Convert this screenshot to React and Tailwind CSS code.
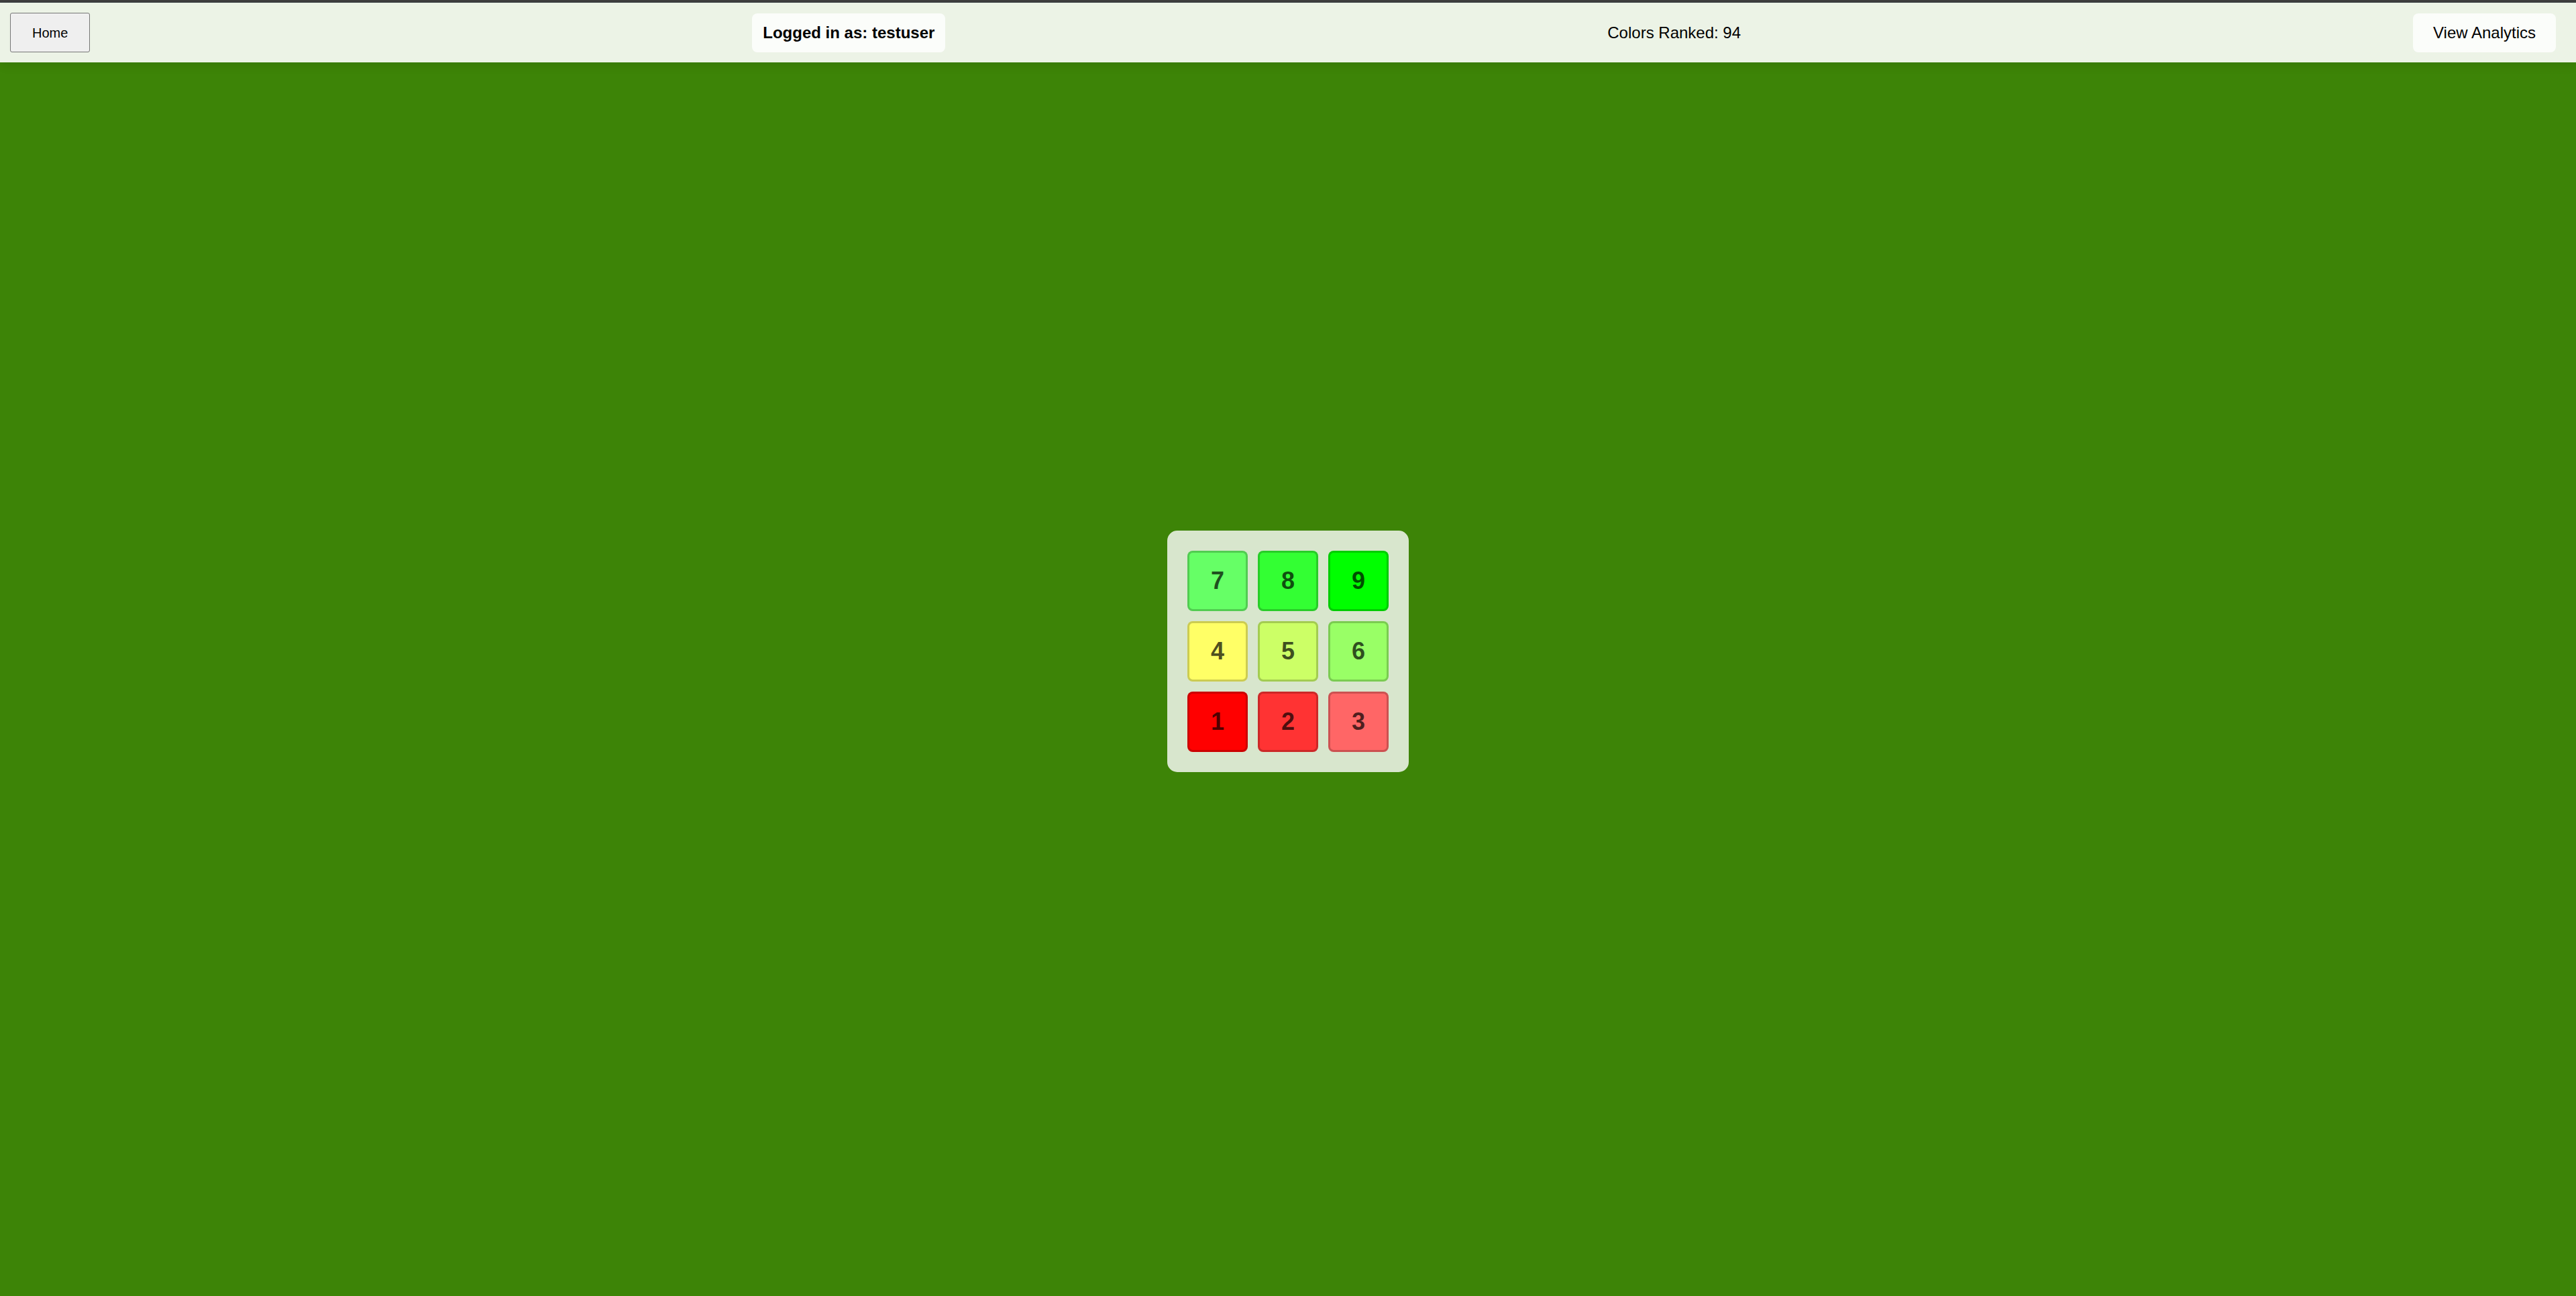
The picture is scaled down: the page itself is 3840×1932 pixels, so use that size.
const scores = [
  { value: 7, color: "bg-[#66ff66]" },
  { value: 8, color: "bg-[#33ff33]" },
  { value: 9, color: "bg-[#00ff00]" },
  { value: 4, color: "bg-[#ffff66]" },
  { value: 5, color: "bg-[#ccff66]" },
  { value: 6, color: "bg-[#99ff66]" },
  { value: 1, color: "bg-[#ff0000]" },
  { value: 2, color: "bg-[#ff3333]" },
  { value: 3, color: "bg-[#ff6666]" },
];

function Header() {
  return (
    <header className="flex h-[89px] items-center justify-between bg-white/90 px-[15px] text-[24px] leading-7 shadow-[0_3px_15px_rgba(0,0,0,0.1)]">
      <button
        type="button"
        className="h-[59px] rounded-[3px] border border-[#767676] bg-[#efefef] px-8 text-[20px]"
      >
        Home
      </button>
      <p className="rounded-[8px] bg-white/80 px-4 py-[15px] font-bold">Logged in as: testuser</p>
      <p>Colors Ranked: 94</p>
      <button type="button" className="mx-[15px] rounded-[8px] bg-white/80 px-[30px] py-[15px]">
        View Analytics
      </button>
    </header>
  );
}

function RatingPad() {
  return (
    <div className="grid grid-cols-3 gap-[15px] rounded-[15px] bg-white/80 p-[30px]">
      {scores.map(({ value, color }) => (
        <button
          key={value}
          type="button"
          className={`size-[90px] rounded-[8px] border-[3px] border-black/20 text-[36px] leading-10 font-bold text-black/70 ${color}`}
        >
          {value}
        </button>
      ))}
    </div>
  );
}

export default function App() {
  return (
    <div className="flex min-h-screen flex-col bg-[#3d8407] font-['Liberation_Sans',Arial,sans-serif] text-black">
      <div className="h-1 border-b border-[#353a3e] bg-[#404040]" />
      <Header />
      <main className="flex flex-1 items-center justify-center pb-[83px]">
        <RatingPad />
      </main>
    </div>
  );
}
